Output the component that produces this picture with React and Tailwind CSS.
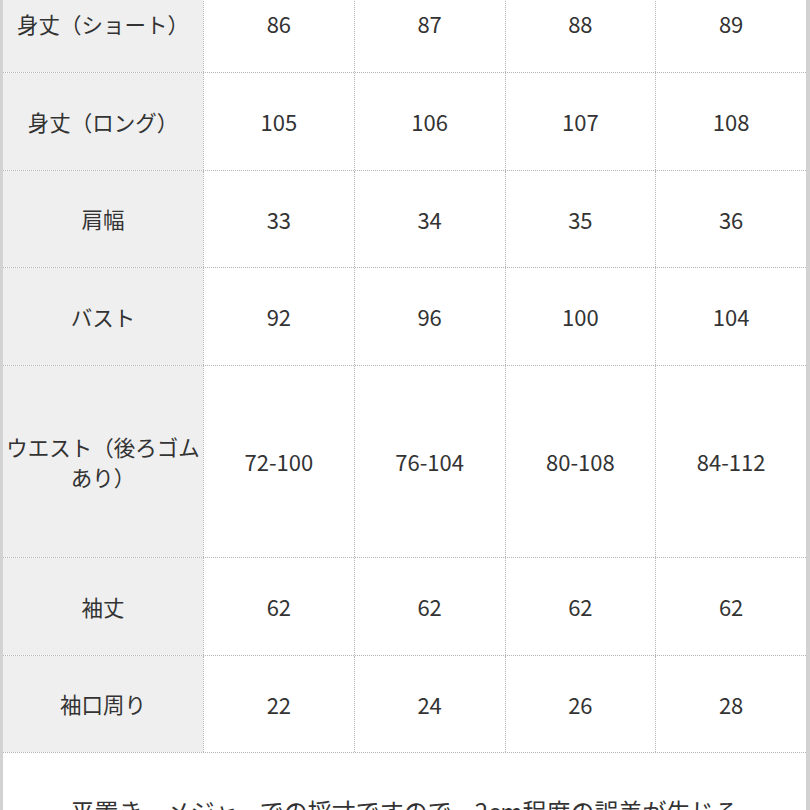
const rows = [
  { label: "身丈（ショート）", values: ["86", "87", "88", "89"], h: "h-[98px]" },
  { label: "身丈（ロング）", values: ["105", "106", "107", "108"], h: "h-[98px]" },
  { label: "肩幅", values: ["33", "34", "35", "36"], h: "h-[97px]" },
  { label: "バスト", values: ["92", "96", "100", "104"], h: "h-[98px]" },
  { label: "ウエスト（後ろゴムあり）", values: ["72-100", "76-104", "80-108", "84-112"], h: "h-[192px]" },
  { label: "袖丈", values: ["62", "62", "62", "62"], h: "h-[98px]" },
  { label: "袖口周り", values: ["22", "24", "26", "28"], h: "h-[97px]" },
];

export default function App() {
  return (
    <div
      className="h-[810px] w-[810px] overflow-hidden bg-white text-[#333333]"
      style={{ fontFamily: '"Noto Sans CJK JP", "Noto Sans", sans-serif' }}
    >
      <div className="-mt-[25px] border-l-[3px] border-r-[4px] border-[#d2d2d2]">
        {rows.map((row) => (
          <div
            key={row.label}
            className={`flex ${row.h} border-b border-dotted border-[#b4b4b4]`}
          >
            <div className="flex w-[200px] shrink-0 items-center justify-center bg-[#efefef] px-[2px] text-center text-[21.5px] leading-[30px]">
              {row.label}
            </div>
            {row.values.map((v, i) => (
              <div
                key={i}
                className="flex flex-1 items-center justify-center border-l border-dotted border-[#b4b4b4] text-[22px]"
              >
                {v}
              </div>
            ))}
          </div>
        ))}
        <div className="pt-[40px] text-center text-[24px] leading-[36px]">
          平置き・メジャーでの採寸ですので、2cm程度の誤差が生じる
          <br />
          場合がございます。
        </div>
      </div>
    </div>
  );
}
